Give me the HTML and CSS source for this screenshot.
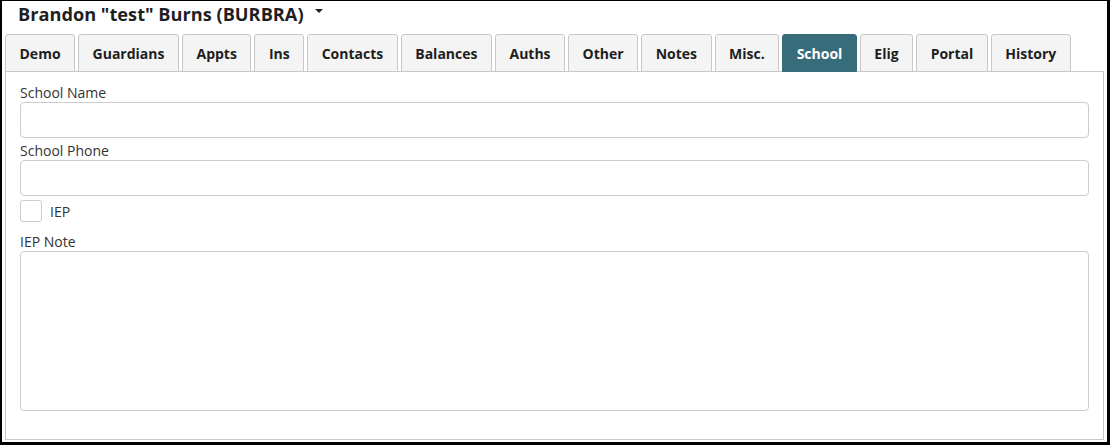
FILE: index.html
```html
<!DOCTYPE html>
<html>
<head>
<meta charset="utf-8">
<link rel="stylesheet" href="styles.css">
</head>
<body>
<div class="frame">
  <div class="header">
    <span class="title">Brandon "test" Burns (BURBRA)</span>
    <span class="caret"></span>
  </div>
  <div class="tabs">
    <div class="tab">Demo</div>
    <div class="tab">Guardians</div>
    <div class="tab">Appts</div>
    <div class="tab">Ins</div>
    <div class="tab">Contacts</div>
    <div class="tab">Balances</div>
    <div class="tab">Auths</div>
    <div class="tab">Other</div>
    <div class="tab">Notes</div>
    <div class="tab">Misc.</div>
    <div class="tab active">School</div>
    <div class="tab">Elig</div>
    <div class="tab">Portal</div>
    <div class="tab">History</div>
  </div>
  <div class="panel">
    <label class="label">School Name</label>
    <div class="input"></div>
    <label class="label">School Phone</label>
    <div class="input"></div>
    <div class="check-row">
      <span class="checkbox"></span>
      <span class="check-label">IEP</span>
    </div>
    <label class="label">IEP Note</label>
    <div class="textarea"></div>
  </div>
</div>
</body>
</html>
```

FILE: styles.css
```css
* { box-sizing: border-box; }
html, body { margin: 0; padding: 0; background: #fff; }
body { font-family: "Open Sans", "Liberation Sans", sans-serif; color: #333; }
.frame {
  width: 1110px;
  height: 445px;
  border-style: solid;
  border-color: #000;
  border-width: 1px 3px 3px 2px;
  padding: 0 3px 2px 3px;
  display: flex;
  flex-direction: column;
  background: #fff;
}
.header {
  height: 33px;
  display: flex;
  align-items: center;
  padding-left: 13px;
  padding-bottom: 7px;
}
.title {
  font-weight: 700;
  font-size: 18.2px;
  color: #1f1f1f;
}
.caret {
  width: 0;
  height: 0;
  border-left: 4px solid transparent;
  border-right: 4px solid transparent;
  border-top: 4px solid #222;
  margin-left: 11px;
  margin-top: -6px;
}
.tabs {
  display: flex;
  gap: 3px;
  position: relative;
  z-index: 1;
  margin-bottom: -1px;
}
.tab {
  height: 38px;
  padding: 0 13.5px;
  display: flex;
  align-items: center;
  font-weight: 700;
  font-size: 14px;
  color: #1e1e1e;
  background: #f4f4f4;
  border: 1px solid #c8c8c8;
  border-radius: 3px 3px 0 0;
}
.tab.active {
  background: #376c7a;
  border-color: #376c7a;
  color: #fff;
}
.panel {
  flex: 1;
  border: 1px solid #c8c8c8;
  padding: 11px 14px 0 14px;
  display: flex;
  flex-direction: column;
}
.label {
  font-size: 14px;
  line-height: 18px;
  padding-top: 1px;
  color: #333;
  display: block;
}
.input {
  height: 36px;
  border: 1px solid #ccc;
  border-radius: 4px;
  margin-top: 0;
  margin-bottom: 3px;
}
.check-row {
  display: flex;
  align-items: center;
  height: 22px;
  margin-top: 1px;
  margin-bottom: 10px;
}
.checkbox {
  width: 22px;
  height: 22px;
  border: 1px solid #ccc;
  border-radius: 3px;
}
.check-label {
  font-size: 14px;
  margin-left: 8px;
  color: #333;
}
.textarea {
  height: 160px;
  border: 1px solid #ccc;
  border-radius: 4px;
  margin-top: 0;
}
```
